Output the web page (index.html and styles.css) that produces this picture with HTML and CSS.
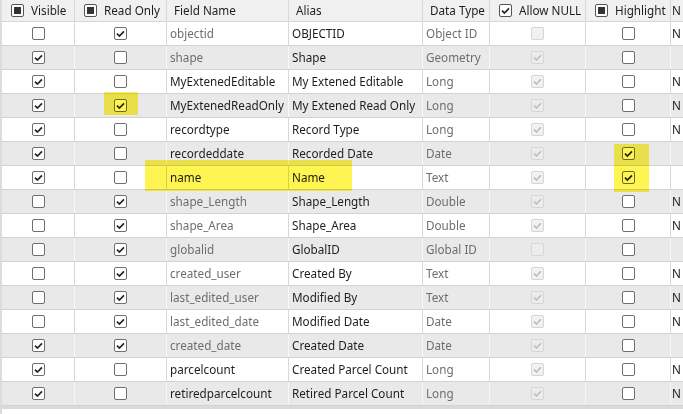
FILE: index.html
```html
<!DOCTYPE html>
<html>
<head>
<meta charset="utf-8">
<link rel="stylesheet" href="styles.css">
</head>
<body>
<div class="grid">
  <div class="row head">
    <div class="c ctr-l"><span class="cb ind"></span><span>Visible</span></div>
    <div class="c ctr-l"><span class="cb ind"></span><span>Read Only</span></div>
    <div class="c txt">Field Name</div>
    <div class="c txt">Alias</div>
    <div class="c txt">Data Type</div>
    <div class="c ctr-l"><span class="cb on"><svg viewBox="0 0 13 13"><path d="M3 6.6 L5.4 9 L10 4.3"/></svg></span><span>Allow NULL</span></div>
    <div class="c ctr-l"><span class="cb ind"></span><span>Highlight</span></div>
    <div class="c txt last">N</div>
  </div>
  <div class="body" id="body"></div>
  <div class="hl hl-ro"></div>
  <div class="hl hl-name"></div>
  <div class="hl hl-high"></div>
</div>
<script src="app.js"></script>
</body>
</html>
```
FILE: app.js
```js
// Field list: visible, read only, field dimmed, name, alias, type, allow null state, highlight, nullable text
const rows = [
  [0,1,1,"objectid","OBJECTID","Object ID","off",0,"N"],
  [1,0,1,"shape","Shape","Geometry","on",0,""],
  [1,0,0,"MyExtenedEditable","My Extened Editable","Long","on",0,"N"],
  [1,1,0,"MyExtenedReadOnly","My Extened Read Only","Long","on",0,"N"],
  [1,0,0,"recordtype","Record Type","Long","on",0,"N"],
  [1,0,0,"recordeddate","Recorded Date","Date","on",1,""],
  [1,0,0,"name","Name","Text","on",1,""],
  [0,1,1,"shape_Length","Shape_Length","Double","on",0,"N"],
  [0,1,1,"shape_Area","Shape_Area","Double","on",0,"N"],
  [0,1,1,"globalid","GlobalID","Global ID","off",0,""],
  [0,1,1,"created_user","Created By","Text","on",0,"N"],
  [0,1,1,"last_edited_user","Modified By","Text","on",0,"N"],
  [0,1,1,"last_edited_date","Modified Date","Date","on",0,"N"],
  [1,1,1,"created_date","Created Date","Date","on",0,""],
  [1,0,0,"parcelcount","Created Parcel Count","Long","on",0,"N"],
  [1,0,0,"retiredparcelcount","Retired Parcel Count","Long","on",0,"N"]
];
const tick = '<svg viewBox="0 0 13 13"><path d="M3 6.6 L5.4 9 L10 4.3"/></svg>';
function box(on, dis) {
  return '<span class="cb' + (on ? ' on' : '') + (dis ? ' dis' : '') + '">' + (on ? tick : '') + '</span>';
}
const body = document.getElementById('body');
body.innerHTML = rows.map(function (r, i) {
  return '<div class="row' + (i % 2 ? ' alt' : '') + '">' +
    '<div class="c ctr">' + box(r[0]) + '</div>' +
    '<div class="c ctr">' + box(r[1]) + '</div>' +
    '<div class="c txt' + (r[2] ? ' dim' : '') + '">' + r[3] + '</div>' +
    '<div class="c txt">' + r[4] + '</div>' +
    '<div class="c txt dim">' + r[5] + '</div>' +
    '<div class="c ctr">' + box(r[6] === 'on', true) + '</div>' +
    '<div class="c ctr">' + box(r[7]) + '</div>' +
    '<div class="c txt last">' + r[8] + '</div>' +
    '</div>';
}).join('');
```
FILE: styles.css
```css
html, body {
  margin: 0;
  padding: 0;
  background: #fff;
}
body {
  font-family: "Noto Sans", "Open Sans", sans-serif;
  font-size: 11.7px;
  color: #1e1e1e;
  width: 683px;
  height: 414px;
  overflow: hidden;
}
.grid {
  position: relative;
  border-left: 2px solid #dcdcdc;
  height: 414px;
}
.row {
  display: grid;
  grid-template-columns: 73px 92px 122px 134px 67px 96px 85px 1fr;
  height: 23px;
  border-bottom: 1px solid #d2d2d2;
  background: #fff;
}
.row.alt {
  background: #e9e9e9;
}
.row.head {
  height: 21px;
  background: #f0f0f0;
  border-bottom: 1px solid #d6d6d6;
}
.body {
  border-bottom: 3px solid #dadada;
}
.c {
  border-right: 1px solid #d8d8d8;
  display: flex;
  align-items: center;
  white-space: nowrap;
  overflow: hidden;
  min-width: 0;
}
.row.alt .c {
  border-right-color: #f6f6f6;
}
.c:last-child {
  border-right: none;
}
.txt {
  padding: 0 0 2px 3px;
}
.head .txt {
  padding-left: 7px;
  padding-bottom: 1px;
}
.row .txt.last {
  padding-left: 1px;
}
.dim {
  color: #6e6e6e;
}
.ctr {
  justify-content: center;
}
.ctr-l {
  padding-left: 9px;
  gap: 7px;
  padding-bottom: 1px;
}

/* checkbox */
.cb {
  width: 11px;
  height: 11px;
  border: 1px solid #6f6f6f;
  border-radius: 2px;
  background: #fff;
  position: relative;
  flex: none;
  display: inline-block;
}
.cb svg {
  position: absolute;
  left: -1px;
  top: -1px;
  width: 13px;
  height: 13px;
}
.cb svg path {
  fill: none;
  stroke: #262626;
  stroke-width: 1.7;
}
.cb.dis {
  border-color: #d6d6d6;
  background: #f1f1f1;
}
.row.alt .cb.dis {
  background: #ececec;
}
.cb.dis svg path {
  stroke: #b9b9b9;
  stroke-width: 1.4;
}
.cb.ind::after {
  content: "";
  position: absolute;
  left: 2px;
  top: 2px;
  width: 7px;
  height: 7px;
  background: #333;
}
.head .cb {
  border-color: #555;
}

/* yellow marker strokes laid over cells */
.hl {
  position: absolute;
  background: #fff552;
  mix-blend-mode: multiply;
  pointer-events: none;
}
.hl-ro {
  left: 102px;
  top: 92px;
  width: 34px;
  height: 23px;
}
.hl-name {
  left: 143px;
  top: 160px;
  width: 207px;
  height: 31px;
}
.hl-high {
  left: 612px;
  top: 144px;
  width: 35px;
  height: 48px;
}
```
